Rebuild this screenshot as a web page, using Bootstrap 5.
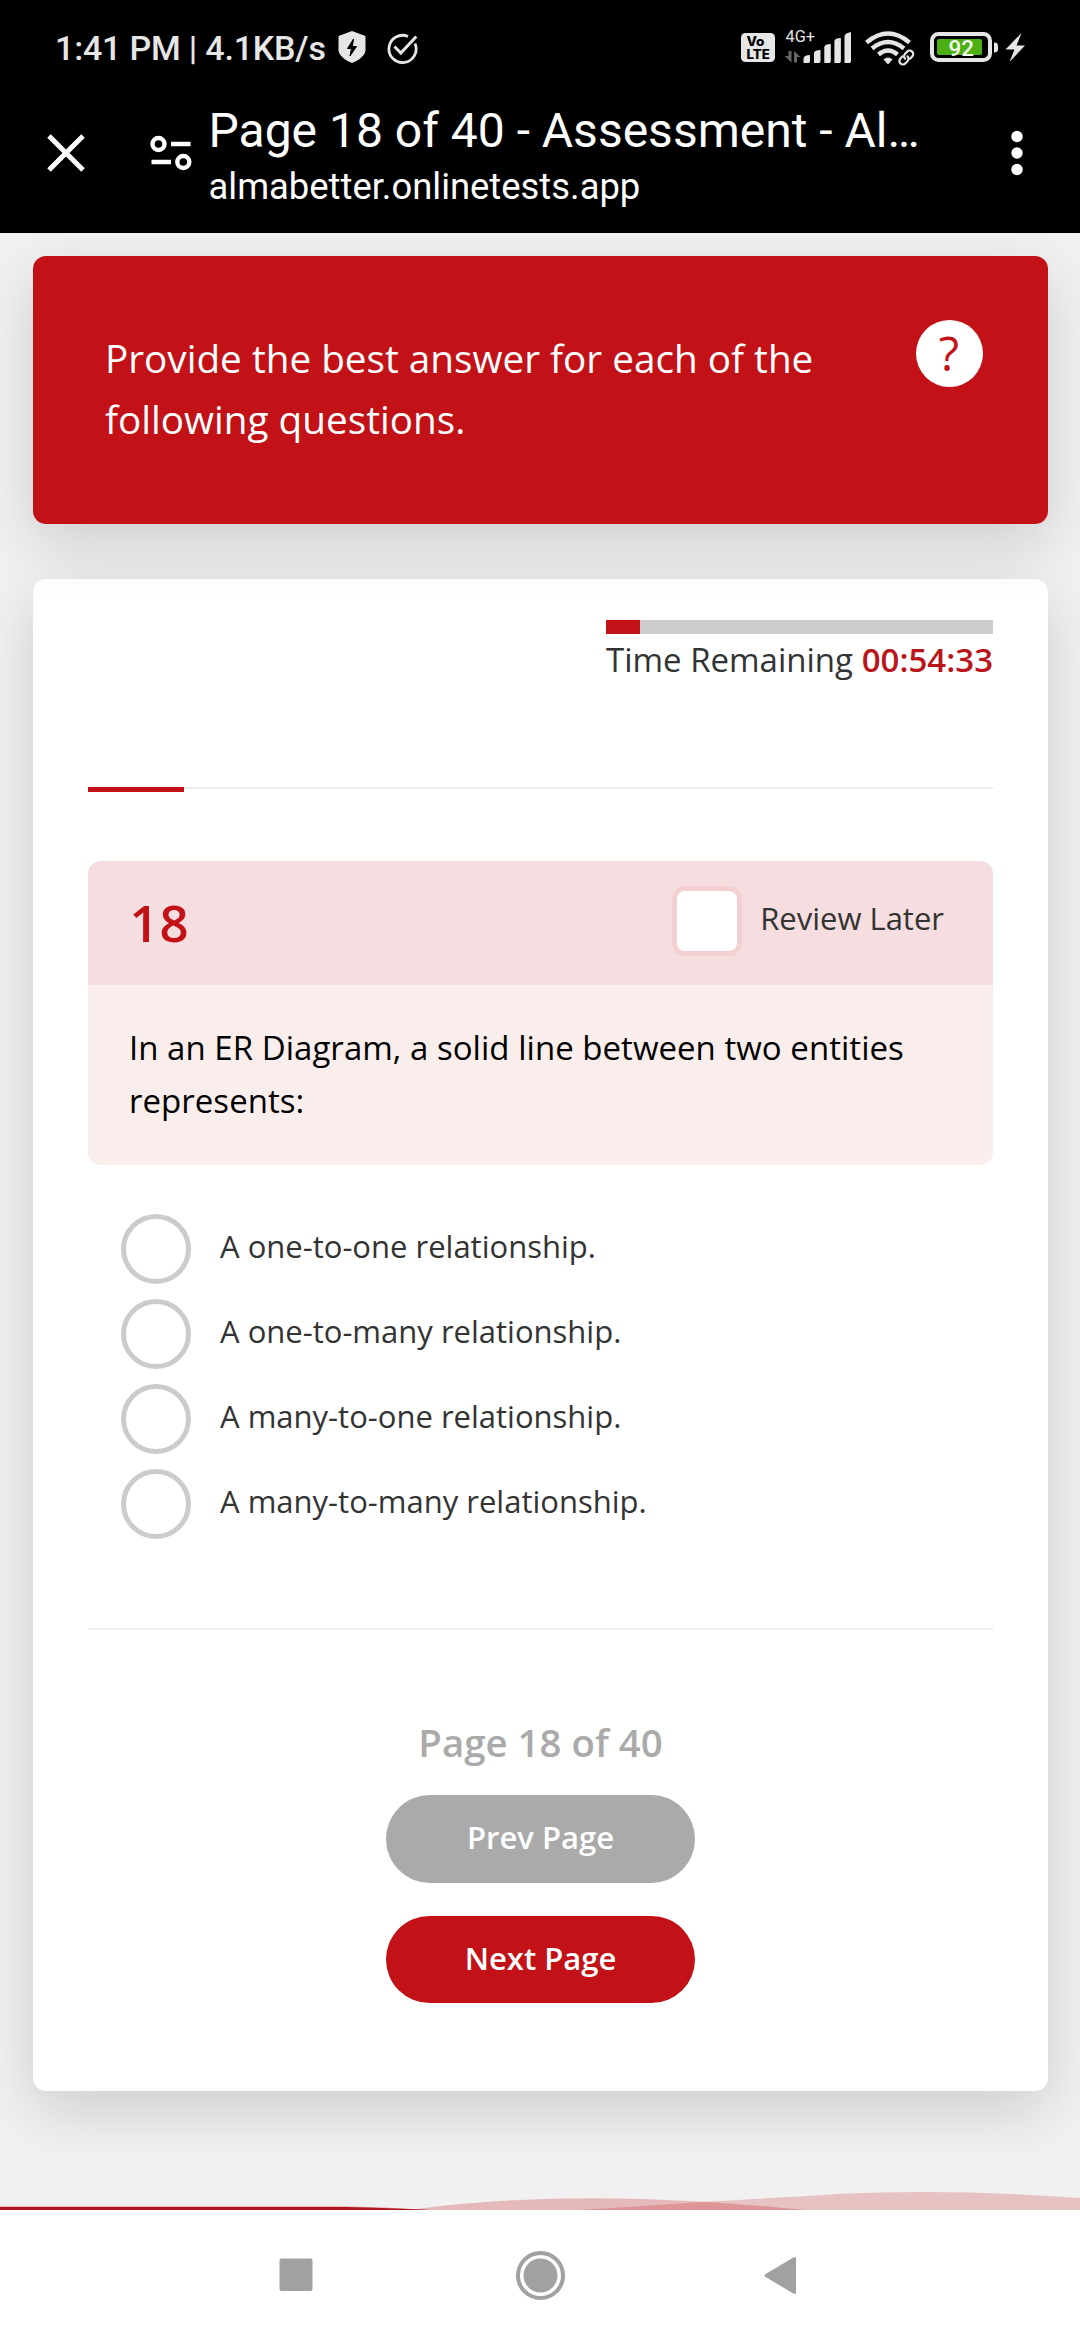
<!DOCTYPE html>
<html lang="en">
<head>
<meta charset="utf-8">
<meta name="viewport" content="width=device-width, initial-scale=1">
<title>Page 18 of 40 - Assessment</title>
<link href="https://cdn.jsdelivr.net/npm/bootstrap@5.3.0/dist/css/bootstrap.min.css" rel="stylesheet">
<style>
:root{--brand:#c21217;--brand-soft:#f6dee0;--brand-pale:#faeeed;--ink:#333}
body{font-family:"Open Sans",sans-serif;color:var(--ink);background:#fff;width:1080px;height:2340px;overflow:hidden}
svg{display:block;flex:none}

/* browser chrome */
.chrome-top{height:233px;background:#000;color:#fff;font-family:Roboto,sans-serif}
.status-bar{height:96px;padding:0 55px 0 55px;color:#e6e6e6}
.status-time{font-size:34px;font-weight:500;line-height:44px;letter-spacing:-.19px;width:281px;white-space:nowrap}
.tab-bar{height:137px;padding:0 57px 23px 47px}
.tab-title{font-size:48px;line-height:56px;white-space:nowrap}
.tab-url{font-size:36.4px;line-height:56px}
.tab-text{margin:7px 0 0 13.5px}
.site-info{margin-left:64px}

/* page */
.page-area{height:1977px;background:#f1f1f1}
.panel{width:1015px;margin-left:33px;border-radius:13px;box-shadow:0 20px 60px rgba(0,0,0,.15)}
.intro{height:268px;margin-top:23px;background:var(--brand);color:#fff;padding:71.5px 65.5px 0 72px;z-index:1}
.intro-text{font-size:38.7px;line-height:61px;width:760px}
.help-btn{width:67px;height:67px;margin-top:-7.5px;background:#fff;color:var(--brand);font-size:47px;font-weight:500;line-height:1}
.quiz{height:1512px;margin-top:55px;padding:41px 55px 0;background:#fff}
.timer{width:387px}
.timer-track{height:14px;border-radius:0;background:#ccc}
.timer-fill{background:var(--brand)}
.timer-text{font-size:33px;height:50px;line-height:52px;white-space:nowrap}
.timer-left{color:#b9151a}
.steps{height:5px;margin-top:103px;border-top:2px solid #eee}
.steps-fill{height:5px;margin-top:-2px;background:var(--brand)}
.question{margin-top:69px;border-radius:13px;overflow:hidden}
.q-head{height:124px;background:var(--brand-soft);padding:0 49px 0 41.5px}
.q-num{font-size:51px;font-weight:600;line-height:1;color:var(--brand);letter-spacing:.8px;margin-top:-2px}
.q-body{height:180px;background:var(--brand-pale);padding:37px 39px 0 41px;color:#000;font-size:33px;line-height:52.7px;letter-spacing:.03px}
.review-box{width:70px;height:70px;border:5px solid #f3d0d1;border-radius:13px;background:#fff}
.review{gap:18.5px;font-size:31px;line-height:50px;margin-top:-4px}
.review span{margin-top:-7px}
.options{margin:49px 0 0 33px;gap:15px}
.option{height:70px;gap:29px;font-size:31px}
.option-ring{width:70px;height:70px;border:5px solid #ccc}
.option-label{margin-top:-5px}
.divider{height:2px;margin-top:89px;background:#eee}
.page-count{font-size:38.4px;font-weight:600;line-height:52px;color:#aaa;margin-top:86px}
.btn-page{width:309px;height:88px;border:0;border-radius:44px;color:#fff!important;font-size:31px;font-weight:600;line-height:84px;padding:0 0 4px}
.btn-prev{background:#aaa!important;margin-top:27px}
.btn-next{background:var(--brand)!important;margin-top:33px;height:87px}
.nav-keys{height:130px;background:#fff}
</style>
</head>
<body>
<header class="chrome-top">
  <div class="status-bar d-flex align-items-center">
    <div class="status-time">1:41 PM | 4.1KB/s</div>
    <svg width="82" height="40" viewBox="336 28 82 40">
      <path d="M352 31l13.500 5v14c0 5-6 10-13.500 13-7.500-3-13.500-8-13.500-13V36z" fill="#e6e6e6"/>
      <path d="M353.500 39l-6 9.500h4l-1.500 7.500 6.500-9.500h-4.200z" fill="#000" stroke="#000" stroke-width="1"/>
      <path d="M408 36.500A13.600 13.600 0 1 0 415 43.500" fill="none" stroke="#e6e6e6" stroke-width="2.800"/>
      <path d="M394.500 46.500l6.300 6.500 15.500-16.500" fill="none" stroke="#e6e6e6" stroke-width="3"/>
    </svg>
    <svg class="ms-auto" width="285" height="40" viewBox="740 28 285 40" fill="#e6e6e6">
      <rect x="741" y="33" width="34" height="29" rx="4.500"/>
      <g font-family="Inter, sans-serif" font-weight="800" fill="#000" font-size="12.500">
        <text x="746.500" y="46" textLength="18" lengthAdjust="spacingAndGlyphs">Vo</text>
        <text x="746.500" y="58.700" textLength="23.500" lengthAdjust="spacingAndGlyphs">LTE</text>
      </g>
      <text x="785.500" y="41.700" font-family="Roboto, sans-serif" font-size="16" textLength="29.500" lengthAdjust="spacingAndGlyphs">4G+</text>
      <path d="M788.500 51h3v11.500l-7-6.500h4zM794 62.500V51l6.500 6h-3.500v5.500z" fill="#666"/>
      <path d="M803.500 63v-4q0-4 6.500-4v6q0 2-1.500 2zM814 63V53q.5-3 6.500-3v11q0 2-1.500 2zM824.300 63V47q.5-3 6.500-3v17q0 2-1.500 2zM834.400 63V41q.5-3 6.500-3v23q0 2-1.500 2zM844.500 63V36q.5-3 6.500-4v29q0 2-1.500 2z"/>
      <g fill="none" stroke="#e6e6e6" stroke-width="4.300">
        <path d="M866.500 42.500Q888 24.500 909.500 42.500"/>
        <path d="M872 48.500Q888 35.500 904 48.500"/>
        <path d="M878.500 54.500Q888 46.500 897.500 54.500"/>
      </g>
      <path d="M883.500 59.500q4.500-4 9 0L888 64.500z"/>
      <g fill="none" stroke="#000" stroke-width="5" transform="rotate(-45 906.300 57.500)"><rect x="897.500" y="53.500" width="17.500" height="8" rx="4"/></g>
      <g fill="none" stroke="#e6e6e6" stroke-width="2.200" stroke-linecap="round" transform="rotate(-45 906.300 57.500)">
        <path d="M904.500 54h-3a3.500 3.500 0 0 0 0 7h3a3.500 3.500 0 0 0 3.500-3.500M908.100 61h3a3.500 3.500 0 0 0 0-7h-3a3.500 3.500 0 0 0-3.500 3.500"/>
      </g>
      <rect x="932" y="34" width="58" height="26" rx="6.500" fill="none" stroke="#e6e6e6" stroke-width="4"/>
      <rect x="937" y="39" width="45" height="16" rx="2" fill="#4caf13"/>
      <path d="M994 42.500q4 0 4 3v4q0 3-4 3z"/>
      <text x="948.500" y="55.600" font-family="Roboto, sans-serif" font-weight="500" font-size="22" fill="#f4fff0" textLength="25.500" lengthAdjust="spacingAndGlyphs">92</text>
      <path d="M1021.500 33l-16 16.500h9l-5 12.500 15.500-16.500h-8.500z"/>
    </svg>
  </div>
  <div class="tab-bar d-flex align-items-center">
    <svg width="38" height="38" viewBox="0 0 38 38"><path d="M2 2l34 34M36 2L2 36" stroke="#fff" stroke-width="5" fill="none"/></svg>
    <svg class="site-info" width="46" height="36" viewBox="149 135 46 36" fill="none" stroke="#fff" stroke-width="4.400">
      <circle cx="158.500" cy="144" r="6"/><path d="M171 144h19.500M151.500 162H171"/><circle cx="183.300" cy="162" r="6"/>
    </svg>
    <div class="tab-text align-self-start flex-grow-1">
      <div class="tab-title">Page 18 of 40 - Assessment - Al…</div>
      <div class="tab-url">almabetter.onlinetests.app</div>
    </div>
    <svg width="12" height="46" viewBox="0 0 12 46" fill="#fff"><circle cx="6" cy="6.500" r="5.700"/><circle cx="6" cy="23" r="5.700"/><circle cx="6" cy="39.500" r="5.700"/></svg>
  </div>
</header>

<main class="page-area d-flex flex-column overflow-hidden">
  <section class="panel intro position-relative d-flex justify-content-between align-items-start flex-shrink-0">
    <div class="intro-text">Provide the best answer for each of the following questions.</div>
    <div class="help-btn rounded-circle d-flex align-items-center justify-content-center">?</div>
  </section>

  <section class="panel quiz flex-shrink-0">
    <div class="timer ms-auto">
      <div class="progress timer-track"><div class="progress-bar timer-fill" style="width:8.8%"></div></div>
      <div class="timer-text d-flex justify-content-between"><span>Time Remaining</span><span class="timer-left fw-semibold">00:54:33</span></div>
    </div>
    <div class="steps"><div class="steps-fill" style="width:96px"></div></div>

    <div class="question">
      <div class="q-head d-flex align-items-center justify-content-between">
        <div class="q-num">18</div>
        <label class="review d-flex align-items-center"><div class="review-box"></div><span>Review Later</span></label>
      </div>
      <div class="q-body">In an ER Diagram, a solid line between two entities represents:</div>
    </div>

    <div class="options d-flex flex-column">
      <div class="option d-flex align-items-center"><div class="option-ring rounded-circle"></div><div class="option-label">A one-to-one relationship.</div></div>
      <div class="option d-flex align-items-center"><div class="option-ring rounded-circle"></div><div class="option-label">A one-to-many relationship.</div></div>
      <div class="option d-flex align-items-center"><div class="option-ring rounded-circle"></div><div class="option-label">A many-to-one relationship.</div></div>
      <div class="option d-flex align-items-center"><div class="option-ring rounded-circle"></div><div class="option-label">A many-to-many relationship.</div></div>
    </div>

    <div class="divider"></div>
    <div class="d-flex flex-column align-items-center">
      <div class="page-count">Page 18 of 40</div>
      <button type="button" class="btn btn-page btn-prev">Prev Page</button>
      <button type="button" class="btn btn-page btn-next">Next Page</button>
    </div>
  </section>

  <svg class="mt-auto" width="1080" height="20" viewBox="0 2190 1080 20">
    <path d="M0 2206.200H340Q385 2207 430 2210H0z" fill="#e5a5a8"/>
    <path d="M0 2207H345Q390 2208 430 2210H0z" fill="#ae181d"/>
    <path d="M410 2210Q445 2204.500 500 2201 595 2195.500 690 2201 750 2204.500 806 2210z" fill="#c21217" fill-opacity=".25"/>
    <path d="M578 2210Q640 2206.500 701 2202 810 2196 840 2193.700 960 2189 1080 2198V2210z" fill="#c21217" fill-opacity=".21"/>
  </svg>
</main>

<nav class="nav-keys">
  <svg width="1080" height="130" viewBox="0 2210 1080 130" fill="#a1a1a1">
    <rect x="279.500" y="2258.500" width="33" height="32.500" rx="2"/>
    <circle cx="540.500" cy="2275.500" r="22.500" fill="none" stroke="#a1a1a1" stroke-width="4"/>
    <circle cx="540.500" cy="2275.500" r="17"/>
    <path d="M766 2275.500L794.500 2258.500V2292.500z" stroke="#a1a1a1" stroke-width="3" stroke-linejoin="round"/>
  </svg>
</nav>
<script src="https://cdn.jsdelivr.net/npm/bootstrap@5.3.0/dist/js/bootstrap.bundle.min.js"></script>
</body>
</html>
